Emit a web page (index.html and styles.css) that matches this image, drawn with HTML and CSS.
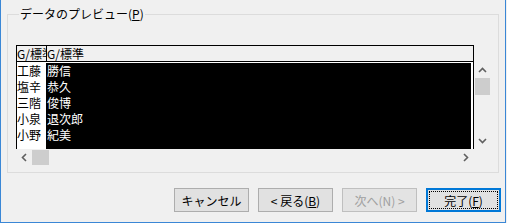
FILE: index.html
```html
<!DOCTYPE html>
<html lang="ja">
<head>
<meta charset="utf-8">
<link rel="stylesheet" href="styles.css">
</head>
<body>
<div class="window">
  <fieldset class="group">
    <legend class="group-label">データのプレビュー(<u>P</u>)</legend>
    <div class="preview">
      <div class="header">
        <div class="hcell first">G/標準</div>
        <div class="hcell">G/標準</div>
      </div>
      <div class="data">
        <div class="col family">
          <div class="cell">工藤</div>
          <div class="cell">塩辛</div>
          <div class="cell">三階</div>
          <div class="cell">小泉</div>
          <div class="cell">小野</div>
        </div>
        <div class="col given">
          <div class="cell">勝信</div>
          <div class="cell">恭久</div>
          <div class="cell">俊博</div>
          <div class="cell">退次郎</div>
          <div class="cell">紀美</div>
        </div>
      </div>
      <div class="vscroll">
        <div class="sbtn"><svg width="9" height="6" viewBox="0 0 9 6"><polyline points="1,5 4.5,1.5 8,5" fill="none" stroke="#606060" stroke-width="1.6"/></svg></div>
        <div class="vthumb"></div>
        <div class="vtrack"></div>
        <div class="sbtn"><svg width="9" height="6" viewBox="0 0 9 6"><polyline points="1,1 4.5,4.5 8,1" fill="none" stroke="#606060" stroke-width="1.6"/></svg></div>
      </div>
      <div class="hscroll">
        <div class="sbtn h"><svg width="6" height="9" viewBox="0 0 6 9"><polyline points="5,1 1.5,4.5 5,8" fill="none" stroke="#606060" stroke-width="1.6"/></svg></div>
        <div class="hthumb"></div>
        <div class="htrack"></div>
        <div class="sbtn h"><svg width="6" height="9" viewBox="0 0 6 9"><polyline points="1,1 4.5,4.5 1,8" fill="none" stroke="#606060" stroke-width="1.6"/></svg></div>
      </div>
    </div>
  </fieldset>
  <div class="buttons">
    <button class="btn">キャンセル</button>
    <button class="btn">&lt; 戻る(<u>B</u>)</button>
    <button class="btn disabled">次へ(N) &gt;</button>
    <button class="btn default"><span class="focus">完了(<u>F</u>)</span></button>
  </div>
</div>
</body>
</html>
```
FILE: styles.css
```css
html, body {
  margin: 0;
  padding: 0;
  background: #f0f0f0;
}
body {
  font-family: "Noto Sans CJK JP", "Noto Sans", sans-serif;
  font-size: 12px;
  color: #000;
}
.window {
  width: 506px;
  height: 223px;
  box-sizing: border-box;
  border-left: 1px solid #3a87d6;
  border-right: 1px solid #3a87d6;
  border-bottom: 1px solid #3a87d6;
  background: #f0f0f0;
  overflow: hidden;
}
.group {
  margin: 6px 0 0 6px;
  width: 492px;
  height: 167px;
  box-sizing: border-box;
  border: 1px solid #dcdcdc;
  padding: 23px 0 0 8px;
  min-width: 0;
}
.group-label {
  margin-left: 3px;
  padding: 0 1px;
  line-height: 16px;
  font-size: 12px;
}
.group-label u { text-decoration: underline; }
.preview {
  display: grid;
  grid-template-columns: 458px 17px;
  grid-template-rows: 17px 87px 17px;
  width: 475px;
}
.header {
  grid-column: 1;
  grid-row: 1;
  display: flex;
  border: 1px solid #000;
  border-bottom-width: 1px;
  box-sizing: border-box;
  height: 17px;
  background: #f0f0f0;
  line-height: 15px;
  font-size: 12px;
}
.hcell {
  white-space: nowrap;
  overflow: hidden;
  flex: 1;
}
.hcell.first {
  flex: 0 0 29px;
  border-right: 1px solid #000;
}
.data {
  grid-column: 1;
  grid-row: 2;
  display: flex;
  border-left: 1px solid #000;
  border-right: 1px solid #000;
  background: #fff;
  padding: 1px 2px 0 0;
  overflow: hidden;
}
.col {
  display: flex;
  flex-direction: column;
}
.family {
  flex: 0 0 29px;
  background: #fff;
  color: #000;
}
.given {
  flex: 1;
  background: #000;
  color: #fff;
  padding-left: 1px;
}
.cell {
  height: 16px;
  line-height: 16px;
  white-space: nowrap;
}
.vscroll {
  grid-column: 2;
  grid-row: 2;
  display: flex;
  flex-direction: column;
  background: #f0f0f0;
}
.sbtn {
  flex: 0 0 16px;
  display: flex;
  align-items: center;
  justify-content: center;
}
.vthumb {
  flex: 0 0 17px;
  margin: 0 1px;
  background: #cdcdcd;
}
.vtrack { flex: 1; }
.hscroll {
  grid-column: 1;
  grid-row: 3;
  display: flex;
  background: #f0f0f0;
}
.hthumb {
  flex: 0 0 17px;
  margin: 1px 0;
  background: #cdcdcd;
}
.htrack { flex: 1; }
.buttons {
  display: flex;
  justify-content: flex-end;
  gap: 9px;
  margin-top: 15px;
  padding-right: 4px;
}
.btn {
  width: 75px;
  height: 24px;
  box-sizing: border-box;
  margin: 0;
  padding: 0;
  font-family: "Noto Sans CJK JP", "Noto Sans", sans-serif;
  font-size: 12px;
  color: #000;
  background: #e1e1e1;
  border: 1px solid #adadad;
  display: flex;
  align-items: center;
  justify-content: center;
}
.btn.disabled {
  color: #a0a0a0;
  border-color: #bfbfbf;
  background: #e3e3e3;
}
.btn.default {
  border: 2px solid #0078d7;
  padding: 1px;
}
.focus {
  flex: 1;
  align-self: stretch;
  display: flex;
  align-items: center;
  justify-content: center;
  border: 1px dotted #000;
}
```
